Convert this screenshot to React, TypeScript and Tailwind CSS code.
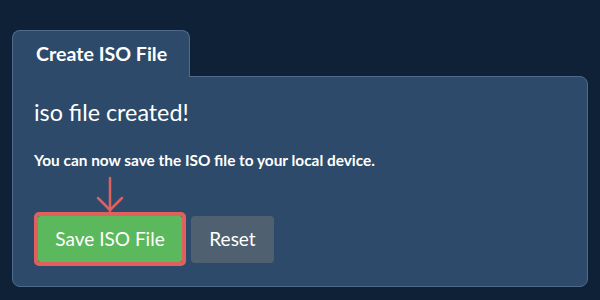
import React from "react";

export default function App() {
  return (
    <div
      className="w-[600px] h-[300px] bg-[#0f2136] pt-[30px] px-[12px]"
      style={{ fontFamily: "Lato, 'Noto Sans', sans-serif" }}
    >
      <div className="relative z-10 w-[178px] h-[47px] bg-[#2d4a6a] border border-b-0 border-[#4e6b8c] rounded-t-[8px] pl-[23px] pt-[11px]">
        <span className="text-[19.6px] font-bold text-white leading-[24px]">Create ISO File</span>
      </div>
      <div className="-mt-px h-[211px] bg-[#2d4a6a] border border-[#4e6b8c] rounded-b-[8px] rounded-tr-[8px] pl-[21px] pt-[20px]">
        <div className="text-[23.3px] font-normal text-white leading-[30px]">iso file created!</div>
        <div className="mt-[23px] text-[15.4px] font-bold text-white leading-[20px]">
          You can now save the ISO file to your local device.
        </div>
        <div className="mt-[46px] flex items-start gap-[5px]">
          <div className="relative border-[4px] border-[#e0605e] rounded-[5px] -mt-[4px]">
            <svg
              className="absolute left-1/2 -translate-x-1/2 -top-[40px]"
              width="30"
              height="38"
              viewBox="0 0 30 38"
              fill="none"
              stroke="#e0605e"
              strokeWidth="2.5"
              strokeLinecap="round"
              strokeLinejoin="round"
            >
              <path d="M15 2 V35" />
              <path d="M3 22 L15 34 L27 22" />
            </svg>
            <button className="block w-[144px] h-[46px] bg-[#5cb85c] text-white text-[19px] font-normal rounded-[2px]">
              Save ISO File
            </button>
          </div>
          <button className="w-[83px] h-[47px] bg-[#4f6070] text-white text-[19px] font-normal rounded-[4px]">
            Reset
          </button>
        </div>
      </div>
    </div>
  );
}
